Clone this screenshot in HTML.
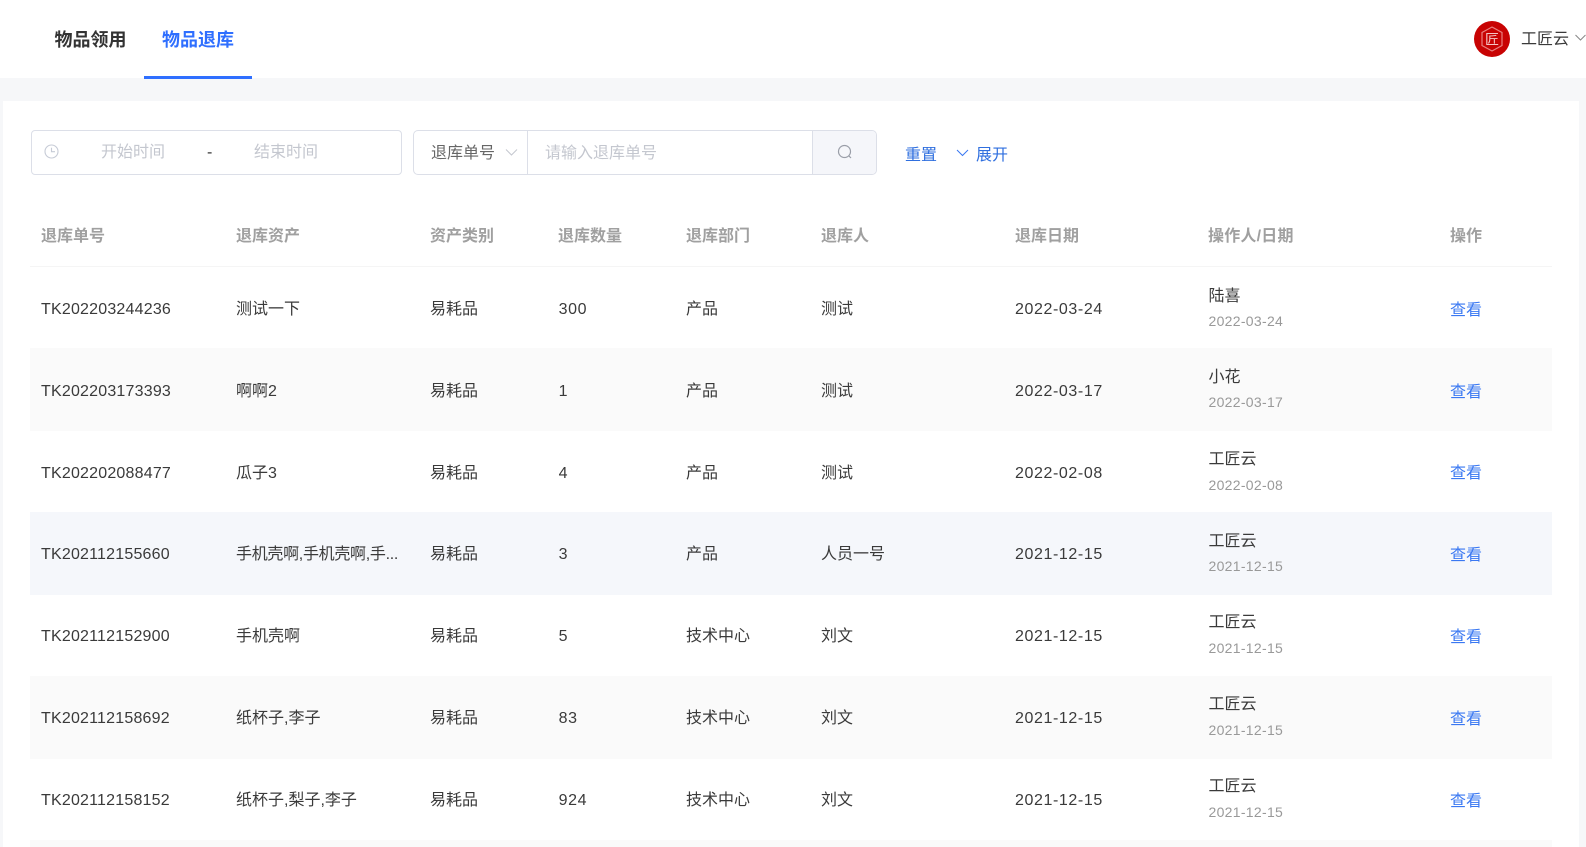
<!DOCTYPE html>
<html lang="zh-CN">
<head>
<meta charset="utf-8">
<title>物品退库</title>
<style>
html,body{margin:0;padding:0;width:1586px;height:847px;overflow:hidden;background:#f6f7f9;font-family:"Liberation Sans","Noto Sans CJK SC",sans-serif;color:#3a3a3a;font-size:16px}
div,span,svg{position:absolute;white-space:nowrap}
.t{line-height:24px;height:24px}
.r{left:30px;width:1522px;height:82px}
.z{background:#fafafa}
.c{top:31px;line-height:24px}
.p .c{top:32px}
.n{letter-spacing:.2px}
.d{letter-spacing:.6px}
.g{margin-left:.6px}
.h{top:225px;line-height:24px;font-weight:bold;color:#a0a0a0}
.a{color:#3a78f2;left:1420px;top:32px;line-height:24px}
.p .a{top:33px}
.o{left:1178.5px;top:17px;line-height:24px}
.q .o{top:18px}
.s{left:1178.5px;top:43px;line-height:22px;font-size:14px;color:#999;letter-spacing:.3px}
.y .s{top:44px}
</style>
</head>
<body>
<div style="left:0;top:0;width:1586px;height:78px;background:#fff"></div>
<div class="t" style="left:54.5px;top:28px;font-size:18px;font-weight:bold;color:#333">物品领用</div>
<div class="t" style="left:162px;top:28px;font-size:18px;font-weight:bold;color:#2f6fff">物品退库</div>
<div style="left:144px;top:76px;width:108px;height:3px;background:#2f6fff"></div>
<svg style="left:1474px;top:21px" width="36" height="36" viewBox="0 0 36 36"><circle cx="18" cy="18" r="18" fill="#c80303"/><path d="M18 6 28 11.5V24.5L18 30 8 24.5V11.5Z" fill="none" stroke="#e98080" stroke-width="1.2"/><text x="18" y="23.5" font-size="14" text-anchor="middle" fill="#f3c4c4" font-family="Noto Sans CJK SC">匠</text></svg>
<div class="t" style="left:1521px;top:28px">工匠云</div>
<svg style="left:1575px;top:34px" width="11" height="8" viewBox="0 0 11 8"><path d="M.5 1 5.5 6 10.5 1" fill="none" stroke="#888" stroke-width="1"/></svg>

<div style="left:3px;top:101px;width:1576px;height:746px;background:#fff"></div>

<div style="left:31px;top:130px;width:369px;height:43px;border:1px solid #dcdfe8;border-radius:4px;background:#fff"></div>
<svg style="left:44px;top:144px" width="15" height="15" viewBox="0 0 15 15"><circle cx="7.5" cy="7.5" r="6.5" fill="none" stroke="#c6cbd6" stroke-width="1.1"/><path d="M7.5 3.8V7.7H11" fill="none" stroke="#c6cbd6" stroke-width="1.1"/></svg>
<div class="t" style="left:101px;top:141px;color:#c4c7cf">开始时间</div>
<div class="t" style="left:207px;top:141px;color:#333">-</div>
<div class="t" style="left:254px;top:141px;color:#c4c7cf">结束时间</div>

<div style="left:413px;top:130px;width:462px;height:43px;border:1px solid #dcdfe8;border-radius:5px;background:#fff"></div>
<div style="left:527px;top:130px;width:1px;height:45px;background:#dcdfe8"></div>
<div style="left:812px;top:131px;width:63px;height:43px;background:#f5f6fa;border-left:1px solid #dcdfe8;border-radius:0 4px 4px 0"></div>
<div class="t" style="left:431px;top:142px;color:#666">退库单号</div>
<svg style="left:505px;top:148px" width="13" height="9" viewBox="0 0 13 9"><path d="M1 1.5 6.5 7 12 1.5" fill="none" stroke="#c4c7cf" stroke-width="1"/></svg>
<div class="t" style="left:545px;top:142px;color:#c4c7cf">请输入退库单号</div>
<svg style="left:837px;top:144px" width="16" height="16" viewBox="0 0 16 16"><circle cx="7.5" cy="7.5" r="6" fill="none" stroke="#9a9ea8" stroke-width="1.2"/><path d="M11.8 11.8 14 14" fill="none" stroke="#9a9ea8" stroke-width="1.2"/></svg>
<div class="t" style="left:905px;top:144px;color:#2f6fdf">重置</div>
<svg style="left:956px;top:149px" width="13" height="8" viewBox="0 0 13 8"><path d="M1 1 6.5 6.5 12 1" fill="none" stroke="#3a78f2" stroke-width="1"/></svg>
<div class="t" style="left:976px;top:144px;color:#2f6fdf">展开</div>

<div class="h" style="left:41px">退库单号</div>
<div class="h" style="left:236px">退库资产</div>
<div class="h" style="left:430px">资产类别</div>
<div class="h" style="left:558px">退库数量</div>
<div class="h" style="left:686px">退库部门</div>
<div class="h" style="left:821px">退库人</div>
<div class="h" style="left:1015px">退库日期</div>
<div class="h" style="left:1208px;letter-spacing:.2px">操作人/日期</div>
<div class="h" style="left:1450px">操作</div>
<div style="left:30px;top:266px;width:1522px;height:1px;background:#f5f5f5"></div>

<div class="r q" style="top:267px">
<div class="c n" style="left:11px">TK202203244236</div><div class="c" style="left:206px">测试一下</div><div class="c" style="left:400px">易耗品</div><div class="c d g" style="left:528px">300</div><div class="c" style="left:656px">产品</div><div class="c" style="left:791px">测试</div><div class="c d" style="left:985px">2022-03-24</div><div class="o">陆喜</div><div class="s">2022-03-24</div><div class="a">查看</div>
</div>
<div class="r z p q" style="top:348px;height:83px">
<div class="c n" style="left:11px">TK202203173393</div><div class="c" style="left:206px">啊啊2</div><div class="c" style="left:400px">易耗品</div><div class="c d g" style="left:528px">1</div><div class="c" style="left:656px">产品</div><div class="c" style="left:791px">测试</div><div class="c d" style="left:985px">2022-03-17</div><div class="o">小花</div><div class="s">2022-03-17</div><div class="a">查看</div>
</div>
<div class="r p q y" style="top:430px">
<div class="c n" style="left:11px">TK202202088477</div><div class="c" style="left:206px">瓜子3</div><div class="c" style="left:400px">易耗品</div><div class="c d g" style="left:528px">4</div><div class="c" style="left:656px">产品</div><div class="c" style="left:791px">测试</div><div class="c d" style="left:985px">2022-02-08</div><div class="o">工匠云</div><div class="s">2022-02-08</div><div class="a" style="top:32px">查看</div>
</div>
<div class="r q" style="top:512px;height:83px;background:#f5f7fb">
<div class="c n" style="left:11px">TK202112155660</div><div class="c" style="left:206px;letter-spacing:-.3px">手机壳啊,手机壳啊,手...</div><div class="c" style="left:400px">易耗品</div><div class="c d g" style="left:528px">3</div><div class="c" style="left:656px">产品</div><div class="c" style="left:791px">人员一号</div><div class="c d" style="left:985px">2021-12-15</div><div class="o">工匠云</div><div class="s">2021-12-15</div><div class="a">查看</div>
</div>
<div class="r" style="top:595px;height:81px">
<div class="c n" style="left:11px;top:30px">TK202112152900</div><div class="c" style="left:206px;top:30px">手机壳啊</div><div class="c" style="left:400px;top:30px">易耗品</div><div class="c d g" style="left:528px;top:30px">5</div><div class="c" style="left:656px;top:30px">技术中心</div><div class="c" style="left:791px;top:30px">刘文</div><div class="c d" style="left:985px;top:30px">2021-12-15</div><div class="o" style="top:16px">工匠云</div><div class="s" style="top:42px">2021-12-15</div><div class="a" style="top:31px">查看</div>
</div>
<div class="r z" style="top:676px;height:83px">
<div class="c n" style="left:11px">TK202112158692</div><div class="c" style="left:206px">纸杯子,李子</div><div class="c" style="left:400px">易耗品</div><div class="c d g" style="left:528px">83</div><div class="c" style="left:656px">技术中心</div><div class="c" style="left:791px">刘文</div><div class="c d" style="left:985px">2021-12-15</div><div class="o">工匠云</div><div class="s">2021-12-15</div><div class="a">查看</div>
</div>
<div class="r" style="top:759px;height:81px">
<div class="c n" style="left:11px;top:30px">TK202112158152</div><div class="c" style="left:206px;top:30px">纸杯子,梨子,李子</div><div class="c" style="left:400px;top:30px">易耗品</div><div class="c d g" style="left:528px;top:30px">924</div><div class="c" style="left:656px;top:30px">技术中心</div><div class="c" style="left:791px;top:30px">刘文</div><div class="c d" style="left:985px;top:30px">2021-12-15</div><div class="o" style="top:16px">工匠云</div><div class="s" style="top:42px">2021-12-15</div><div class="a" style="top:31px">查看</div>
</div>
<div style="left:30px;top:840px;width:1522px;height:7px;background:#fafafa"></div>
</body>
</html>
